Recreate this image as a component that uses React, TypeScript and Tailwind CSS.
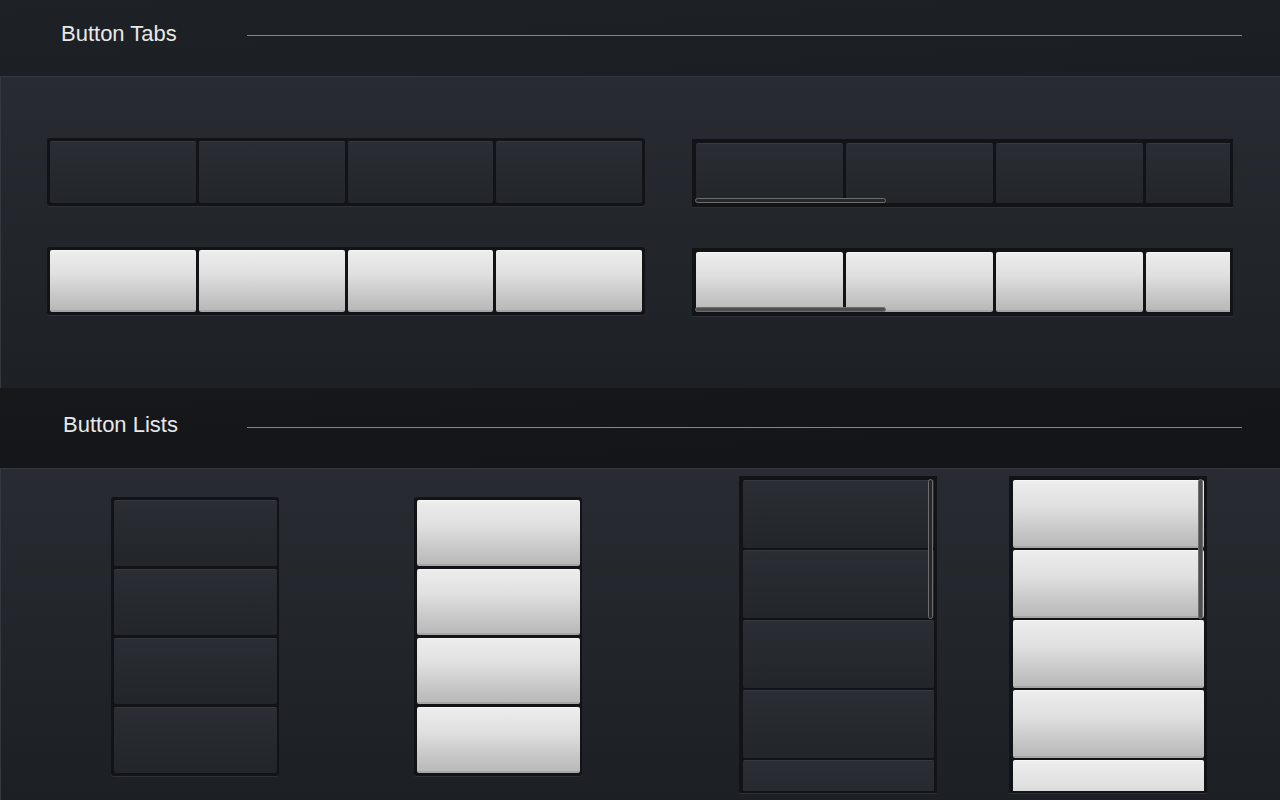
import React from "react"

const font = { fontFamily: '"Liberation Sans", Arial, sans-serif' }

function DarkCell({ className = "" }: { className?: string }) {
  return (
    <div
      className={`rounded-[2px] border-t border-[#353940] bg-gradient-to-b from-[#2a2e34] to-[#222529] ${className}`}
    />
  )
}

function LightCell({ className = "" }: { className?: string }) {
  return (
    <div
      className={`rounded-[2px] border-t border-[#f6f6f6] border-b-2 border-b-[#a6a6a6] bg-[linear-gradient(180deg,#ededed_0%,#dfdfdf_40%,#c6c6c6_78%,#b9b9b9_100%)] ${className}`}
    />
  )
}

function Heading({ title, h, pl, tw, pb, lineMt }: { title: string; h: string; pl: string; tw: string; pb: string; lineMt: string }) {
  return (
    <div className={`flex items-center ${pb} ${h} ${pl}`}>
      <div className={`shrink-0 ${tw} text-[22px] leading-none text-[#e8e8e8]`}>{title}</div>
      <div className={`flex-1 mr-[38px] h-px bg-[#2ea3d3] ${lineMt}`} />
    </div>
  )
}

function TabsFixed({ light }: { light?: boolean }) {
  const Cell = light ? LightCell : DarkCell
  return (
    <div className="w-[598px] h-[68px] flex gap-[3px] p-[3px] rounded-[3px] bg-[#111316] shadow-[0_1px_0_#2d3137]">
      {[0, 1, 2, 3].map((i) => (
        <Cell key={i} className="flex-1" />
      ))}
    </div>
  )
}

function TabsScroll({ light }: { light?: boolean }) {
  const Cell = light ? LightCell : DarkCell
  return (
    <div className="relative mt-px w-[541px] h-[68px] pl-[4px] pr-[3px] py-[4px] bg-[#111316] shadow-[0_1px_0_#2d3137]">
      <div className="flex gap-[3px] h-full overflow-hidden">
        {[0, 1, 2, 3, 4].map((i) => (
          <Cell key={i} className="w-[147px] shrink-0" />
        ))}
      </div>
      <div
        className={`absolute left-[3px] top-[59px] w-[191px] h-[5px] rounded-full border border-[#6e6e6e] ${
          light ? "bg-[#4e4e4e]" : "bg-[#24272b]"
        }`}
      />
    </div>
  )
}

function ListFixed({ light, className = "" }: { light?: boolean; className?: string }) {
  const Cell = light ? LightCell : DarkCell
  return (
    <div
      className={`w-[168px] h-[279px] flex flex-col gap-[3px] pl-[3px] pr-[2px] py-[3px] rounded-[3px] bg-[#111316] shadow-[0_1px_0_#2d3137] ${className}`}
    >
      {[0, 1, 2, 3].map((i) => (
        <Cell key={i} className="h-[66px] shrink-0" />
      ))}
    </div>
  )
}

function ListScroll({ light, className = "" }: { light?: boolean; className?: string }) {
  const Cell = light ? LightCell : DarkCell
  return (
    <div
      className={`relative w-[198px] h-[317px] pl-[4px] pr-[3px] pt-[4px] pb-[2px] bg-[#111316] shadow-[0_1px_0_#2d3137] ${className}`}
    >
      <div className="flex flex-col gap-[2px] h-full overflow-hidden">
        {[0, 1, 2, 3, 4].map((i) => (
          <Cell key={i} className="h-[68px] shrink-0" />
        ))}
      </div>
      <div
        className={`absolute left-[189px] top-[3px] w-[5px] h-[140px] rounded-full border border-[#6e6e6e] ${
          light ? "bg-[#4e4e4e]" : "bg-[#24272b]"
        }`}
      />
    </div>
  )
}

export default function App() {
  return (
    <div className="w-[1280px] h-[800px] overflow-hidden bg-[#1b1e22] flex flex-col" style={font}>
      <div className="bg-gradient-to-br from-[#1e2125] to-[#1a1d21]">
        <Heading title="Button Tabs" h="h-[76px]" pl="pl-[61px]" tw="w-[186px]" pb="pb-[8px]" lineMt="mt-[2px]" />
      </div>

      <div className="h-[312px] border-t border-l border-[#343840] bg-gradient-to-b from-[#282c32] to-[#1d2024] pl-[46px] pt-[61px]">
        <div className="flex gap-[47px] items-start">
          <TabsFixed />
          <TabsScroll />
        </div>
        <div className="flex gap-[47px] items-start mt-[40px]">
          <TabsFixed light />
          <TabsScroll light />
        </div>
      </div>

      <div className="bg-gradient-to-br from-[#16181b] to-[#121417]">
        <Heading title="Button Lists" h="h-[80px]" pl="pl-[63px]" tw="w-[184px]" pb="pb-[6px]" lineMt="mt-[4px]" />
      </div>

      <div className="flex-1 border-t border-l border-[#343840] bg-gradient-to-b from-[#282b31] to-[#1c1f23] flex items-start pl-[110px]">
        <ListFixed className="mt-[28px]" />
        <ListFixed light className="mt-[28px] ml-[135px]" />
        <ListScroll className="mt-[7px] ml-[157px]" />
        <ListScroll light className="mt-[7px] ml-[72px]" />
      </div>
    </div>
  )
}
